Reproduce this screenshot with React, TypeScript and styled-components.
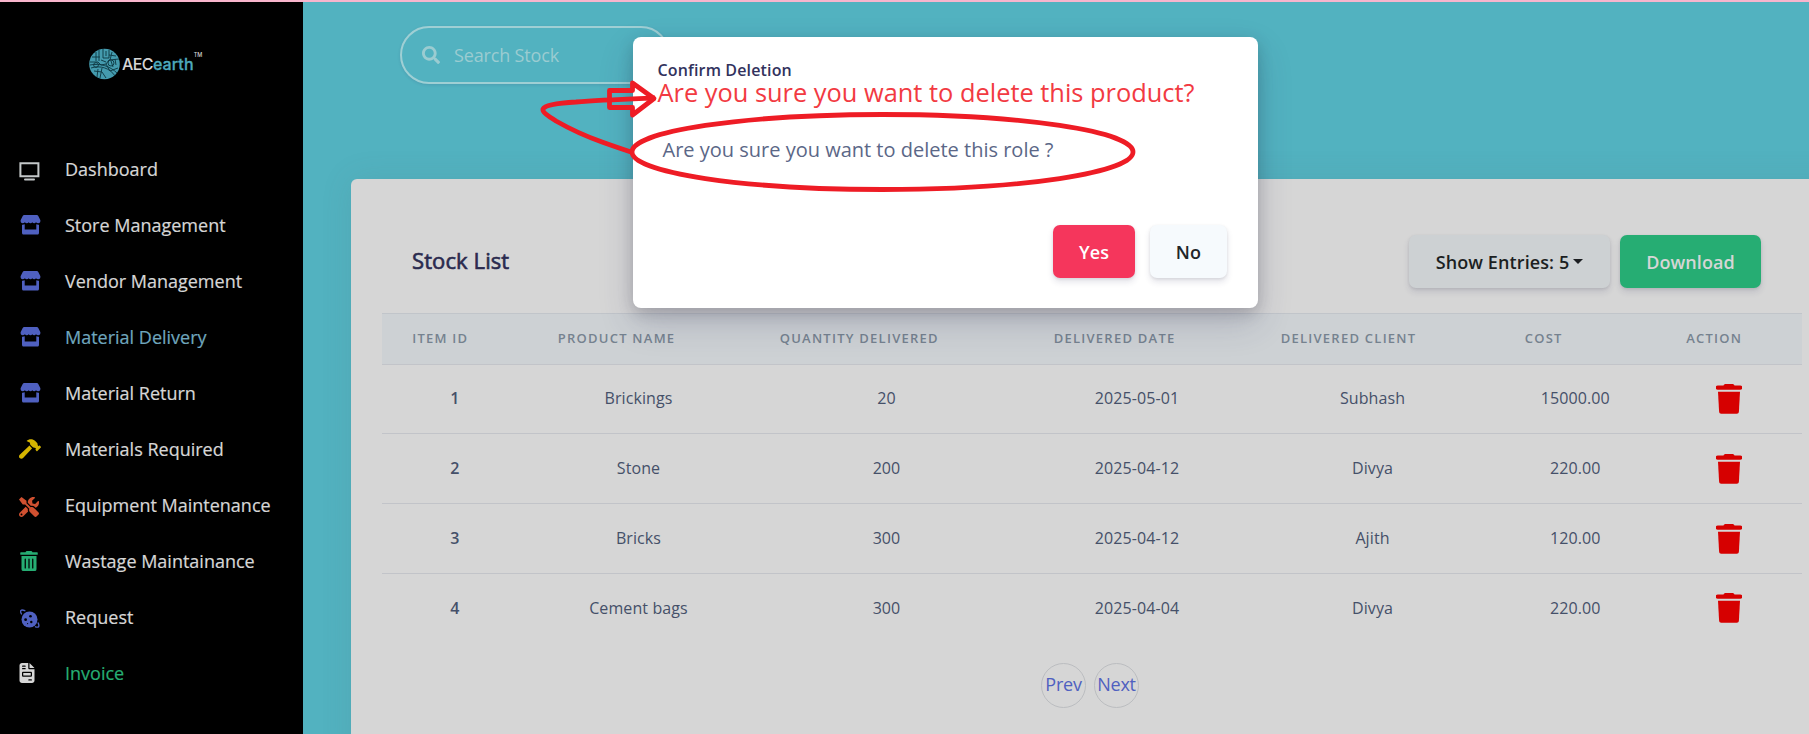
import React from "react";
import styled, { createGlobalStyle } from "styled-components";
import { FaHammer, FaSearch, FaTools, FaTrashAlt } from "react-icons/fa";
import { FaFileInvoice } from "react-icons/fa6";

const Global = createGlobalStyle`
  * { box-sizing: border-box; }
  body { margin: 0; overflow: hidden; font-family: "Open Sans", "Noto Sans", sans-serif; }
  button { font-family: inherit; cursor: pointer; }
`;

const Screen = styled.div`
  position: relative;
  display: flex;
  width: 1809px;
  height: 734px;
  overflow: hidden;
  border-top: 2px solid #f8b5cd;
  background: #52b2c0;
`;

const Sidebar = styled.aside`
  flex: none;
  width: 303px;
  background: #000;
`;

const Brand = styled.div`
  display: flex;
  align-items: center;
  height: 126px;
  padding: 0 0 2px 89px;
`;

const BrandName = styled.div`
  display: flex;
  margin-left: 2px;
  font: 500 16px/20px Inter, sans-serif;
  letter-spacing: -0.6px;
  color: #d6d6d6;
`;

const BrandAccent = styled.span`
  color: #4da9bd;
  letter-spacing: 0.1px;
  -webkit-text-stroke: 0.3px currentColor;
`;

const Trademark = styled.span`
  margin: -4px 0 0 0;
  font-size: 5.5px;
  line-height: 10px;
  letter-spacing: 0;
`;

const Nav = styled.nav`
  display: flex;
  flex-direction: column;
  padding-top: 13px;
`;

const NavItem = styled.a<{ $color?: string }>`
  display: flex;
  align-items: center;
  height: 56px;
  padding-left: 19px;
  font-size: 18px;
  line-height: 27px;
  -webkit-text-stroke: 0.2px currentColor;
  color: ${(p) => p.$color ?? "#d6d6d6"};
`;

const NavIcon = styled.span<{ $tint: string; $drop?: number; $indent?: number }>`
  display: flex;
  flex: none;
  width: 46px;
  padding: ${(p) => p.$drop ?? 0}px 0 0 ${(p) => p.$indent ?? 0}px;
  color: ${(p) => p.$tint};
`;

const DocumentIcon = styled(FaFileInvoice)`
  margin-left: -2px;
`;

const Main = styled.main`
  display: flex;
  flex: none;
  flex-direction: column;
  width: 1560px;
  height: 760px;
  padding: 24px 0 0 48px;
`;

const SearchBox = styled.div`
  display: flex;
  flex: none;
  align-items: center;
  gap: 14px;
  width: 270px;
  height: 58px;
  margin: 0 0 95px 49px;
  padding: 0 0 1px 20px;
  border: 2px solid #9fcfd4;
  border-radius: 29px;
  box-shadow: 0 1px 3px rgba(50, 50, 93, 0.15);
  font-size: 18px;
  letter-spacing: -0.15px;
  color: #9bccd1;
`;

const Card = styled.section`
  display: flex;
  flex: 1;
  flex-direction: column;
  align-items: flex-start;
  padding: 56px 0 0 31px;
  border-radius: 6px;
  background: #d6d6d6;
  box-shadow: 0 0 32px rgba(80, 100, 100, 0.12);
`;

const CardHead = styled.header`
  display: flex;
  flex: none;
  align-items: center;
  width: 1420px;
  height: 53px;
  padding: 0 41px 0 30px;
  margin-bottom: 25px;
`;

const CardTitle = styled.h3`
  flex: 1;
  margin: 0 0 4px;
  font-size: 22px;
  font-weight: 400;
  letter-spacing: 0.1px;
  -webkit-text-stroke: 0.6px currentColor;
  color: #2a2a4e;
`;

type Tone = "muted" | "success" | "danger" | "light";
const tones: Record<Tone, string> = {
  muted: "background: #cdd1d3; color: #1c1f22;",
  success: "background: #26ad73; color: #d6d6d6;",
  danger: "background: #f5365c; color: #fff;",
  light: "background: #f6fafd; color: #212529;",
};

const Button = styled.button<{ $tone: Tone; $width: number }>`
  display: flex;
  align-items: center;
  justify-content: center;
  gap: 4px;
  width: ${(p) => p.$width}px;
  height: 53px;
  padding: 1px 0 0;
  border: 0;
  border-radius: 7px;
  font-size: 18px;
  font-weight: 600;
  letter-spacing: 0.1px;
  box-shadow: 0 4px 6px rgba(50, 50, 93, 0.13), 0 1px 3px rgba(0, 0, 0, 0.09);
  ${(p) => tones[p.$tone]}
`;

const Caret = styled.i`
  margin-bottom: 2px;
  border: 5px solid transparent;
  border-top-color: currentColor;
  border-bottom: 0;
`;

const HeadActions = styled.div`
  display: flex;
  gap: 10px;
`;

const Table = styled.div`
  display: flex;
  flex: none;
  flex-direction: column;
  width: 1420px;
`;

const columns = "grid-template-columns: 145.5px 222px 274px 227px 244px 161.5px 146px;";

const HeadRow = styled.div`
  display: grid;
  ${columns}
  align-items: center;
  height: 50.6px;
  padding-bottom: 1.6px;
  border-top: 1px solid #c1c5ca;
  background: #cdd1d4;
`;

const HeadCell = styled.div`
  padding: 0 0 0 30.2px;
  font-size: 13px;
  font-weight: 600;
  letter-spacing: 1.25px;
  white-space: nowrap;
  color: #75828f;
`;

const Row = styled.div`
  display: grid;
  ${columns}
  align-items: center;
  height: 69.8px;
  border-top: 1px solid #c2c4c9;
`;

const Cell = styled.div<{ $strong?: boolean }>`
  display: flex;
  justify-content: center;
  padding-bottom: 1.2px;
  font-size: 16px;
  font-weight: ${(p) => (p.$strong ? 600 : 400)};
  letter-spacing: 0.1px;
  color: #455069;
`;

const ActionCell = styled(Cell)`
  padding: 0;
`;

const Pager = styled.div`
  display: flex;
  gap: 8px;
  width: 1420px;
  padding: 20.2px 0 0 659px;
`;

const PageButton = styled.button`
  display: flex;
  align-items: center;
  justify-content: center;
  width: 45px;
  height: 45px;
  padding: 0 0 2px;
  border: 1px solid #bbbdc0;
  border-radius: 50%;
  background: transparent;
  font-size: 18px;
  letter-spacing: -0.2px;
  color: #4f60c0;
`;

const Modal = styled.div`
  position: absolute;
  left: 633px;
  top: 35px;
  display: flex;
  flex-direction: column;
  width: 625px;
  height: 271px;
  padding: 23px 31px 30px 24.5px;
  border-radius: 8px;
  background: #fff;
  box-shadow: 0 15px 35px rgba(50, 50, 93, 0.2), 0 5px 15px rgba(0, 0, 0, 0.17);
`;

const ModalTitle = styled.h5`
  margin: 0;
  font-size: 16px;
  font-weight: 600;
  line-height: 20px;
  letter-spacing: 0.15px;
  color: #32325d;
`;

const Correction = styled.div`
  font-size: 25.4px;
  line-height: 24px;
  white-space: nowrap;
  color: #f23a42;
`;

const Question = styled.p`
  margin: 31px 0 0 5px;
  font-size: 20px;
  line-height: 30px;
  color: #5b6787;
`;

const ModalActions = styled.div`
  display: flex;
  justify-content: flex-end;
  gap: 15px;
  margin-top: auto;
`;

const Markup = styled.svg`
  position: absolute;
  left: 0;
  top: -2px;
  pointer-events: none;
`;

const Globe = () => (
  <svg width="31" height="32" viewBox="0 0 31 32">
    <circle cx="15.5" cy="16" r="15.3" fill="#449bae" />
    <g fill="none" stroke="#0c3540" strokeWidth="0.9">
      <path d="M1 14h8l3 3 5-1 3-4 10-1M2 20c9-3 19 0 24 8M1 17c10-2 20 1 27 8M7 4v9M10 2v11M14 1v9h6V2M17 3v5M3 9h8M20 7l7 1M5 23l8 1 4 6M9 21l-1 8M13 20l-2 10M17 16l4 7 8-3M22 13l2 6M26 11l1 6M23 4l-2 8M12 12l5 2" />
      <circle cx="22" cy="15" r="3" />
      <circle cx="7" cy="17" r="2.4" />
    </g>
  </svg>
);

const ScreenIcon = () => (
  <svg width="21" height="19" viewBox="0 0 21 19" fill="none" stroke="currentColor" strokeWidth="2">
    <path d="M1.4 1.3h18v13h-18z" />
    <path d="M6 17.6h9" strokeLinecap="round" />
  </svg>
);

const ShopIcon = () => (
  <svg width="21" height="20" viewBox="0 0 21 20" fill="currentColor">
    <path d="M4.2 0h12.6c.7 0 1.2.3 1.5.9l2 4c.5 1.3-.3 3.3-2.1 3.3-1 0-1.7-.4-2.2-1-.5.6-1.1 1-1.9 1s-1.4-.4-1.8-1c-.5.6-1.1 1-1.8 1s-1.4-.4-1.8-1c-.5.6-1.1 1-1.9 1s-1.5-.4-1.9-1c-.5.6-1.2 1-2.2 1C1 8.2.2 6.2.7 4.9l2-4C3 .3 3.5 0 4.2 0z" />
    <path d="M2 9.7c.8.1 1.9 0 2.7-.4v5.2h11.6V9.3c.8.4 1.9.5 2.7.4v8c0 1.2-.7 1.9-1.9 1.9H3.9C2.7 19.6 2 18.9 2 17.7z" />
  </svg>
);

const PlanetIcon = () => (
  <svg width="20" height="20" viewBox="0 0 20 20">
    <circle cx="9.5" cy="10.5" r="8" fill="currentColor" />
    <path d="M1.5 5C-.5 1.5 1 .1 4.8 1.7M15.5 17.8c3 1 4.3 0 2.7-3.8" fill="none" stroke="currentColor" strokeWidth="1.4" strokeLinecap="round" />
    <g fill="#000">
      <circle cx="10.5" cy="7.3" r="1.3" />
      <circle cx="5.6" cy="10.7" r="1.4" />
      <circle cx="11.3" cy="13" r="1.2" />
      <circle cx="7.6" cy="14.6" r=".6" />
    </g>
  </svg>
);

const BinIcon = () => (
  <svg width="26" height="30" viewBox="0 0 26 30" fill="#d60000">
    <path d="M7.5 1.5C8 .5 8.6 0 9.6 0h6.8c1 0 1.6.5 2.1 1.5h5.7a1.8 1.8 0 0 1 0 4.2H1.8a1.8 1.8 0 0 1 0-4.2z" />
    <path d="M2 7.7h22l-1.1 20.1c-.1 1.3-.9 2-2.1 2H5.2c-1.2 0-2-.7-2.1-2z" />
  </svg>
);

const stock = [
  ["1", "Brickings", "20", "2025-05-01", "Subhash", "15000.00"],
  ["2", "Stone", "200", "2025-04-12", "Divya", "220.00"],
  ["3", "Bricks", "300", "2025-04-12", "Ajith", "120.00"],
  ["4", "Cement bags", "300", "2025-04-04", "Divya", "220.00"],
];
const headings = ["ITEM ID", "PRODUCT NAME", "QUANTITY DELIVERED", "DELIVERED DATE", "DELIVERED CLIENT", "COST", "ACTION"];

type Item = { label: string; icon: React.ReactNode; tint: string; color?: string; drop?: number; indent?: number };
const navItems: Item[] = [
  { label: "Dashboard", icon: <ScreenIcon />, tint: "#c4c8c9", drop: 4 },
  { label: "Store Management", icon: <ShopIcon />, tint: "#4f60c0", indent: 1 },
  { label: "Vendor Management", icon: <ShopIcon />, tint: "#4f60c0", indent: 1 },
  { label: "Material Delivery", icon: <ShopIcon />, tint: "#4f60c0", color: "#6fa6bd", indent: 1 },
  { label: "Material Return", icon: <ShopIcon />, tint: "#4f60c0", indent: 1 },
  { label: "Materials Required", icon: <FaHammer size={22} />, tint: "#d6b500" },
  { label: "Equipment Maintenance", icon: <FaTools size={20} />, tint: "#d05030", drop: 4 },
  { label: "Wastage Maintainance", icon: <FaTrashAlt size={20} />, tint: "#26ad73" },
  { label: "Request", icon: <PlanetIcon />, tint: "#4f60c0", drop: 4, indent: 0.5 },
  { label: "Invoice", icon: <DocumentIcon size={20} />, tint: "#d6d6d6", color: "#26ad73" },
];

export default function App() {
  return (
    <>
      <Global />
      <Screen>
        <Sidebar>
          <Brand>
            <Globe />
            <BrandName>
              AEC<BrandAccent>earth</BrandAccent>
              <Trademark>TM</Trademark>
            </BrandName>
          </Brand>
          <Nav>
            {navItems.map((n) => (
              <NavItem key={n.label} $color={n.color}>
                <NavIcon $tint={n.tint} $drop={n.drop} $indent={n.indent}>{n.icon}</NavIcon>
                {n.label}
              </NavItem>
            ))}
          </Nav>
        </Sidebar>
        <Main>
          <SearchBox>
            <FaSearch size={18} />
            Search Stock
          </SearchBox>
          <Card>
            <CardHead>
              <CardTitle>Stock List</CardTitle>
              <HeadActions>
                <Button $tone="muted" $width={201}>
                  Show Entries: 5<Caret />
                </Button>
                <Button $tone="success" $width={141}>Download</Button>
              </HeadActions>
            </CardHead>
            <Table>
              <HeadRow>
                {headings.map((h) => <HeadCell key={h}>{h}</HeadCell>)}
              </HeadRow>
              {stock.map((r) => (
                <Row key={r[0]}>
                  {r.map((v, i) => <Cell key={i} $strong={i === 0}>{v}</Cell>)}
                  <ActionCell><BinIcon /></ActionCell>
                </Row>
              ))}
            </Table>
            <Pager>
              <PageButton>Prev</PageButton>
              <PageButton>Next</PageButton>
            </Pager>
          </Card>
        </Main>
        <Modal>
          <ModalTitle>Confirm Deletion</ModalTitle>
          <Correction>Are you sure you want to delete this product?</Correction>
          <Question>Are you sure you want to delete this role ?</Question>
          <ModalActions>
            <Button $tone="danger" $width={82}>Yes</Button>
            <Button $tone="light" $width={77}>No</Button>
          </ModalActions>
        </Modal>
        <Markup width="1809" height="734" fill="none" stroke="#ee1c25" strokeWidth="4.8">
          <ellipse cx="882.5" cy="152" rx="250.5" ry="37.5" />
          <path d="M631 152C622 149 613 146 602 142C585 136 570 129 556 121C548 116 542 112 543 109C545 105 558 103 576 102C600 100 630 99 655 98" />
          <path d="M609.5 90.5H632.5V83L654 98.5L632.5 115V107.5H609.5Z" strokeLinejoin="round" />
        </Markup>
      </Screen>
    </>
  );
}
